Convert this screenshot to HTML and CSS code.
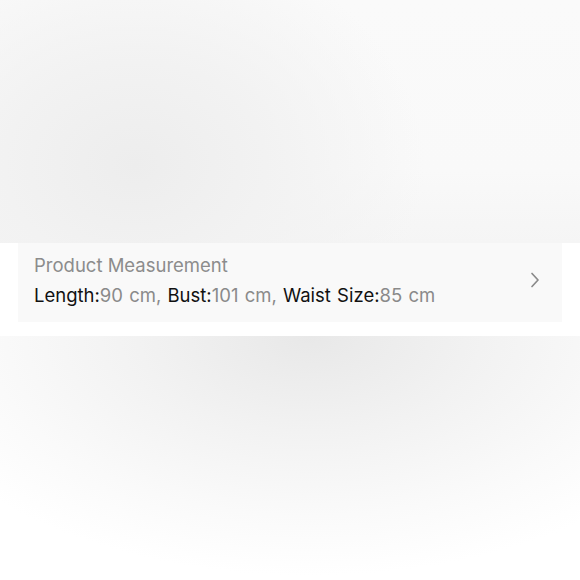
FILE: index.html
```html
<!DOCTYPE html>
<html lang="en">
<head>
    <meta charset="UTF-8">
    <meta name="viewport" content="width=device-width, initial-scale=1.0">
    <title>Product Measurement</title>
    <link rel="stylesheet" href="styles.css">
</head>
<body>
    <div class="backdrop backdrop-top"></div>
    <div class="sheet">
        <div class="measure-row">
            <div class="measure-text">
                <p class="measure-title">Product Measurement</p>
                <p class="measure-values">
                    <span class="label">Length:</span><span class="value">90 cm, </span>
                    <span class="label">Bust:</span><span class="value">101 cm, </span>
                    <span class="label">Waist Size:</span><span class="value">85 cm</span>
                </p>
            </div>
            <svg class="chevron" width="10" height="16" viewBox="0 0 10 16">
                <path d="M2 1.5 L8 8 L2 14.5" fill="none" stroke="#8a8a8a" stroke-width="1.7" stroke-linecap="round" stroke-linejoin="round"/>
            </svg>
        </div>
    </div>
    <div class="backdrop backdrop-bottom"></div>
</body>
</html>
```

FILE: styles.css
```css
body, html {
    margin: 0;
    padding: 0;
    font-family: Inter, "Noto Sans", sans-serif;
    background-color: #ffffff;
}
.backdrop-top {
    height: 243px;
    background:
        radial-gradient(ellipse 290px 230px at 135px 165px, #ededed 0%, #f2f2f2 45%, rgba(249, 249, 249, 0) 100%),
        linear-gradient(to bottom, #fafafa 0%, #f9f9f9 70%, #f5f5f5 100%);
}
.sheet {
    background-color: #ffffff;
    padding: 0 18px 14px 18px;
}
.measure-row {
    box-sizing: border-box;
    background-color: #f9f9f9;
    height: 79px;
    display: flex;
    align-items: center;
    justify-content: space-between;
    padding: 0 22px 5px 16px;
}
.measure-text p {
    margin: 0;
    font-size: 18.5px;
    line-height: 30px;
    white-space: nowrap;
}
.measure-values {
    word-spacing: 1px;
}
.measure-title {
    color: #8c8c8c;
}
.measure-values .label {
    color: #111111;
}
.measure-values .value {
    color: #8a8a8a;
}
.backdrop-bottom {
    height: 244px;
    background: radial-gradient(ellipse 430px 240px at 310px 0, #e8e8e8 0%, #f2f2f2 40%, #fafafa 75%, #ffffff 100%);
}
```
